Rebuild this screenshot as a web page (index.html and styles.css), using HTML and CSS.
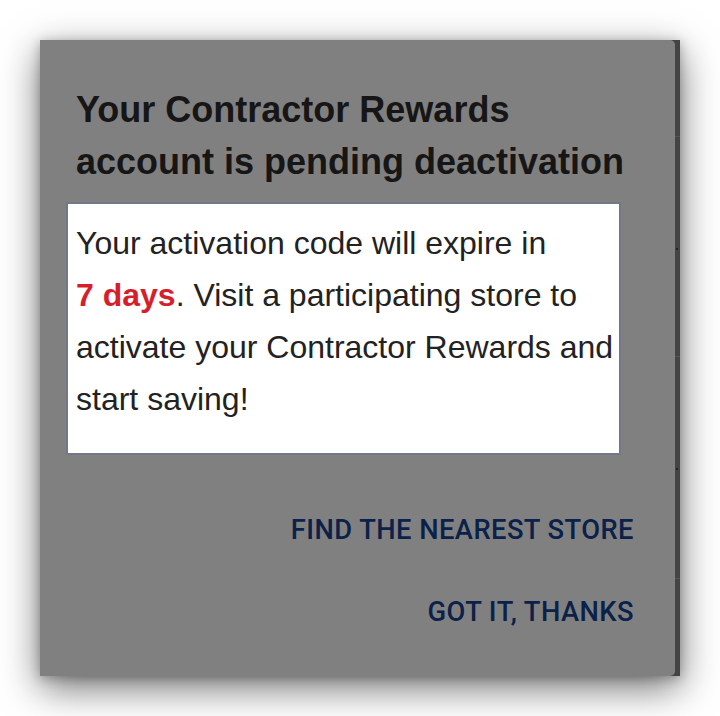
FILE: index.html
```html
<!DOCTYPE html>
<html lang="en">
<head>
<meta charset="utf-8">
<title>Contractor Rewards</title>
<link rel="stylesheet" href="styles.css">
</head>
<body>
<div class="stage">
  <div class="dialog">
    <div class="panel">
      <h1 class="title">Your Contractor Rewards account is pending deactivation</h1>
      <div class="notice">
        <p class="notice-text">Your activation code will expire in <strong class="days">7&nbsp;days</strong>. Visit a participating store to activate your Contractor Rewards and start saving!</p>
      </div>
      <div class="actions">
        <button class="action action-find" type="button">Find the nearest store</button>
        <button class="action action-ok" type="button">Got it, thanks</button>
      </div>
    </div>
    <div class="edge">
      <span class="edge-line edge-l1"></span>
      <span class="edge-dot edge-d1"></span>
      <span class="edge-line edge-l2"></span>
      <span class="edge-dot edge-d2"></span>
      <span class="edge-line edge-l3"></span>
    </div>
  </div>
</div>
</body>
</html>
```

FILE: styles.css
```css
html, body {
  margin: 0;
  padding: 0;
  background: #ffffff;
}

.stage {
  padding: 40px;
}

.dialog {
  width: 640px;
  height: 636px;
  display: flex;
  background: #444444;
  box-shadow: 0 12px 36px rgba(0, 0, 0, 0.55), 0 2px 10px rgba(0, 0, 0, 0.25);
}

.panel {
  width: 635px;
  height: 636px;
  background: #808080;
  border-radius: 0 5px 5px 0;
  display: flex;
  flex-direction: column;
  box-sizing: border-box;
  padding-top: 44px;
}

.title {
  margin: 0 0 0 36px;
  width: 560px;
  font-family: "Liberation Sans", Arial, sans-serif;
  font-weight: 700;
  font-size: 36px;
  line-height: 52px;
  color: #161616;
}

.notice {
  margin: 14px 0 0 26px;
  width: 555px;
  height: 253px;
  box-sizing: border-box;
  background: #ffffff;
  border: 2px solid #737788;
  padding: 13px 3px 0 8px;
}

.notice-text {
  margin: 0;
  font-family: "Liberation Sans", Arial, sans-serif;
  font-size: 32px;
  line-height: 52px;
  color: #222222;
}

.days {
  color: #d71f2c;
  font-weight: 700;
}

.actions {
  display: flex;
  flex-direction: column;
  align-items: flex-end;
  padding-right: 41px;
  margin-top: 55px;
  gap: 42px;
}

.action {
  background: none;
  border: 0;
  padding: 0;
  margin: 0;
  font-family: Roboto, "Liberation Sans", sans-serif;
  font-weight: 500;
  font-size: 27.3px;
  line-height: 40px;
  text-transform: uppercase;
  color: #0b2149;
  letter-spacing: 0.45px;
  cursor: pointer;
}

.edge {
  position: relative;
  width: 5px;
  height: 636px;
}

.edge-line {
  position: absolute;
  left: 0;
  width: 5px;
  height: 1px;
  background: #555555;
}

.edge-l1 { top: 96px; }
.edge-l2 { top: 316px; }
.edge-l3 { top: 538px; }

.edge-dot {
  position: absolute;
  left: 1px;
  width: 2px;
  height: 2px;
  background: #222222;
}

.edge-d1 { top: 208px; }
.edge-d2 { top: 428px; }
```
